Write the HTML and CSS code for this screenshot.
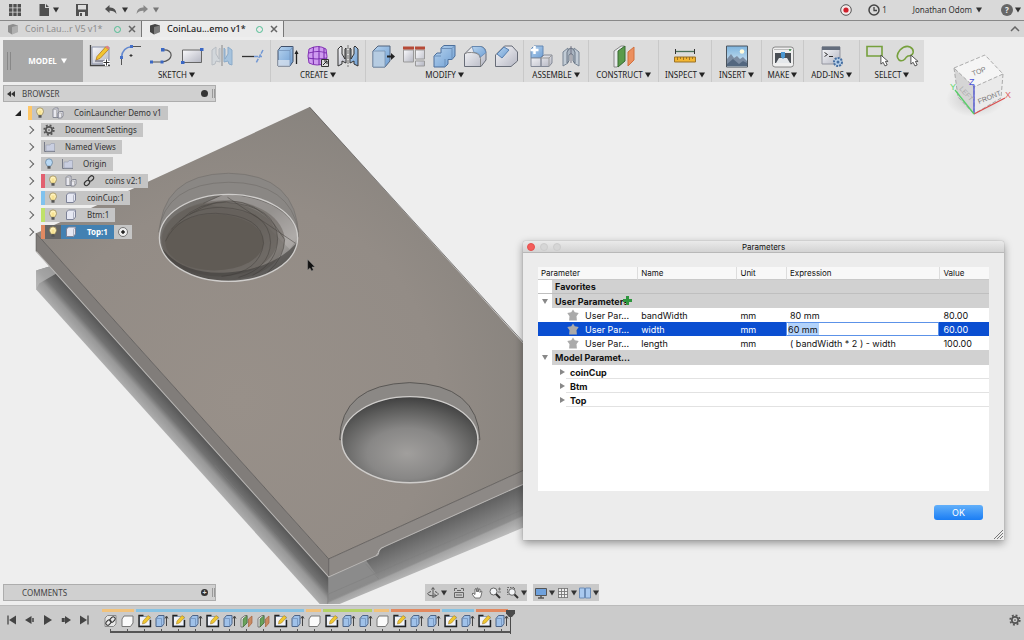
FILE: index.html
```html
<!DOCTYPE html>
<html lang="en">
<head>
<meta charset="utf-8">
<title>CoinLauncher Demo v1</title>
<link rel="stylesheet" href="styles.css">
</head>
<body>
<svg class="defs" aria-hidden="true">
  <defs>
    <linearGradient id="gBlue" x1="0" y1="0" x2="1" y2="1"><stop offset="0" stop-color="#b7d3ee"/><stop offset="1" stop-color="#6f9fd4"/></linearGradient>
    <linearGradient id="gGrey" x1="0" y1="0" x2="1" y2="1"><stop offset="0" stop-color="#fafafc"/><stop offset="1" stop-color="#b4b6c2"/></linearGradient>
    <linearGradient id="gSky" x1="0" y1="0" x2="0" y2="1"><stop offset="0" stop-color="#7db4de"/><stop offset="1" stop-color="#dcebf4"/></linearGradient>
  </defs>
  <symbol id="caret" viewBox="0 0 6 6"><path d="M0 .5h6L3 5.5z" fill="currentColor"/></symbol>
  <symbol id="sketch" viewBox="0 0 24 24"><path d="M2.500 1v20.500H22" fill="none" stroke="#444" stroke-width="1.300"/><path d="M4 3h17v17H4z" fill="url(#gGrey)" stroke="#8890a8"/><path d="M9 12.500 17.500 3l3 2.500-8.500 9-4 1.500z" fill="#f2c531" stroke="#b07a20" stroke-width=".8"/><path d="m17.500 3 3 2.500 1.200-1.600-2.600-2.400z" fill="#e58080"/><path d="M7 17h9" stroke="#556"/><path d="M18.500 15v7M15 18.500h7" stroke="#fff" stroke-width="3"/><path d="M18.500 15.500v6M15.500 18.500h6" stroke="#333"/></symbol>
  <symbol id="fillet" viewBox="0 0 24 24"><path d="M12 2.500h10" stroke="#555"/><path d="M2.500 21v-8" stroke="#555"/><path d="M2.500 13.500Q3 3.500 13 2.500" fill="none" stroke="#6489cf" stroke-width="1.500"/><path d="M1 12h3v3H1zM11 1h3v3h-3z" fill="#4570c8"/><path d="M12 10v3M10.500 11.500h3" stroke="#333"/></symbol>
  <symbol id="curve" viewBox="0 0 24 24"><path d="M2 18h11c12-1 12-13 1-12" fill="none" stroke="#555" stroke-width="1.200"/><path d="M1 16.500h3v3H1zM11.500 16.500h3v3h-3zM12 4h3.500v3.500H12z" fill="#3b68c4"/></symbol>
  <symbol id="rect" viewBox="0 0 24 24"><path d="M2.500 6h19v12.500h-19z" fill="url(#gGrey)" stroke="#666"/><path d="M1 17h3.500v3H1zM20 4h3.500v3H20z" fill="#3b68c4"/></symbol>
  <symbol id="mirror2d" viewBox="0 0 24 24"><path d="M2 21V6l4-3v7l3 5V5l1-1v14l-4-1-1 3z" fill="#d2d7db" stroke="#b7bcc2"/><path d="M22 21V6l-4-3v7l-3 5V5l-1-1v14l4-1 1 3z" fill="#a6c3dd" stroke="#8cabc9"/><path d="M12 1v21" stroke="#888"/></symbol>
  <symbol id="extend" viewBox="0 0 24 24"><path d="M1 12.500h12" stroke="#333" stroke-width="1.300"/><path d="M13 12.500h8M22 6l-7 13" stroke="#7298d4" stroke-width="1.500" stroke-dasharray="4 1"/></symbol>
  <symbol id="extrude" viewBox="0 0 24 24"><path d="M2 6.500 5 2.500h12v15l-3 4.500H2z" fill="url(#gBlue)" stroke="#40506a"/><path d="M2 16h12v6H2z" fill="#e1e7f0" opacity=".7"/><path d="M2 6.500h12V22M14 6.500l3-4" fill="none" stroke="#7593b9" stroke-width=".8"/><path d="M20.500 20V8" stroke="#222" stroke-width="1.300"/><path d="m18.500 10 2-4 2 4z" fill="#222"/></symbol>
  <symbol id="form" viewBox="0 0 24 24"><path d="M3 5q9-5 17 0 2 8 0 14-9 4-17 0-2-7 0-14z" fill="#cf9cf0" stroke="#8434b5"/><path d="M3 9q9-3 17 0M2 14q9 2 19 0M7.500 3q-1 8 0 17M13 2v19M18 4v15" fill="none" stroke="#7b2faf" stroke-width="1.100"/><path d="M15.500 15.500h7v7h-7z" fill="#ddd" stroke="#333"/><path d="m17 21 4-4m-3 0h3v3" fill="none" stroke="#222"/></symbol>
  <symbol id="mirror" viewBox="0 0 24 24"><path d="M2 22V5l3-3 1 1v7l3 5V5l1-1v15l-4-2v3z" fill="url(#gGrey)" stroke="#333"/><path d="M22 22V5l-3-3-1 1v7l-3 5V5l-1-1v15l4-2v3z" fill="url(#gBlue)" stroke="#333"/><path d="M12 1v22" stroke="#777" stroke-dasharray="4 1"/></symbol>
  <symbol id="presspull" viewBox="0 0 24 24"><path d="m2 7 5-5h12v15l-5 6H2z" fill="url(#gBlue)" stroke="#52647e"/><path d="M2 7h12v16H2z" fill="#b6cce2" stroke="#7790ac" stroke-width=".8"/><path d="M16 12.500h5" stroke="#222" stroke-width="2"/><path d="m20 9 4 3.500-4 3.500z" fill="#222"/></symbol>
  <symbol id="align" viewBox="0 0 24 24"><path d="M1.500 6h10v12h-10z" fill="url(#gGrey)" stroke="#999"/><path d="M13.500 6h9v9h-9zM13.500 17h9v5h-9z" fill="url(#gGrey)" stroke="#999"/><path d="M1 2.500h11v3H1zM13 2.500h10v3H13z" fill="#b64a37"/></symbol>
  <symbol id="combine" viewBox="0 0 24 24"><path d="m9 4 3-2.500h11V12l-3 3.500h-4V20l-3 3H2V12l3-3h4z" fill="url(#gBlue)" stroke="#4c6f9b"/><path d="M2 12h7M20 4.500l3-3M9 4.500h11v11M13 15v8" fill="none" stroke="#6b8fb9"/></symbol>
  <symbol id="filletsolid" viewBox="0 0 24 24"><path d="M1.500 10 9 2.500h9q5 1 5 7V16l-5 6.500H1.500z" fill="url(#gGrey)" stroke="#686d78"/><path d="M9 2.500h9q4 1 5 6l-6 5q0-5-6-5z" fill="url(#gBlue)" stroke="#5780b0" stroke-width=".7"/><path d="M1.500 10q2-2 7-1.500 8 0 9 6V22" fill="none" stroke="#888"/></symbol>
  <symbol id="chamfer" viewBox="0 0 24 24"><path d="m1.500 11 9-9H18l5.500 6v9L17 22.500H1.500z" fill="url(#gGrey)" stroke="#686d78"/><path d="m3 10 7-7 5 3-7 8z" fill="url(#gBlue)" stroke="#5780b0"/></symbol>
  <symbol id="component" viewBox="0 0 24 24"><path d="m2 5 3-3h9v9l-3 3H2z" fill="url(#gBlue)" stroke="#6488b4"/><path d="M2 14h10v8.500H2zM12 14l3-3h8v8l-3 3.500h-8z" fill="url(#gGrey)" stroke="#848a97"/><path d="M12 14h8v8.500M20 14l3-3" stroke="#999" fill="none"/><path d="M5.500 2v8M1.500 6h8" stroke="#fff" stroke-width="2.500"/></symbol>
  <symbol id="joint" viewBox="0 0 24 24"><path d="m4 8 5-4v15l-5 3zM20 8l-5-4v15l5 3z" fill="#c2ccd6" stroke="#788594"/><path d="M8 19V8q4-8 8 0v11l-2-2v-6q-2-3-4 0v6z" fill="#aab5c1" stroke="#6c7887"/><path d="M12 2v17" stroke="#667" stroke-width=".8"/></symbol>
  <symbol id="construct" viewBox="0 0 24 24"><path d="m2 7 7-5h3v15l-7 6H2z" fill="#e9eaee" stroke="#888"/><path d="m6 7 7-5v15l-7 6z" fill="#5b9b4b" stroke="#386b33"/><path d="m16 8 6-5v13l-6 6z" fill="#ec8f5e" stroke="#d1703e"/></symbol>
  <symbol id="inspect" viewBox="0 0 24 24"><path d="M2 7.500h20" stroke="#4a7059" stroke-width="1.300"/><path d="M2.500 5v5M21.500 5v5" stroke="#333"/><path d="M1.500 13h21v5h-21z" fill="#f3b632" stroke="#9b7226"/><path d="M4.500 13v3M7.500 13v2M10.500 13v3M13.500 13v2M16.500 13v3M19.500 13v2" stroke="#8b641c" stroke-width=".8"/></symbol>
  <symbol id="insert" viewBox="0 0 24 24"><path d="M1.500 2h21v21h-21z" fill="url(#gSky)" stroke="#4c555e"/><circle cx="17" cy="7.500" r="2.300" fill="#fffbdc"/><path d="m2 15 4-5 3 4 3-2 3 3 3-2 4 4v5H2z" fill="#7c8da3"/><path d="m2 20 6-5 6 5 4-3 4 2v3H2z" fill="#53677f"/></symbol>
  <symbol id="make" viewBox="0 0 24 24"><rect x="1.500" y="3" width="21" height="20" rx="2.500" fill="#efefef" stroke="#888"/><path d="M4 9h16v10H4z" fill="#4a4f55"/><path d="m5 19 3-5h8l3 5z" fill="#e5e8eb"/><path d="M10 8h4v5l-2 2-2-2z" fill="#4a97d1"/><path d="M3 5.500h18" stroke="#bbb"/><circle cx="19" cy="6" r="1" fill="#3b8e4b"/></symbol>
  <symbol id="addins" viewBox="0 0 24 24"><path d="M2 3h18v17H2z" fill="url(#gGrey)" stroke="#9496a0"/><path d="M2 2.500h18V6H2z" fill="#656e7d"/><path d="m4.500 8.500 3 2-3 2M9 12.500h4" fill="none" stroke="#333"/><circle cx="18" cy="18" r="4" fill="#b9d1ea" stroke="#466fa1" stroke-width="2" stroke-dasharray="2 1"/><circle cx="18" cy="18" r="1.500" fill="#466fa1"/></symbol>
  <symbol id="pointer" viewBox="0 0 10 14"><path d="M1 1v10l2.500-2 2 4L8 12 6 8h3z" fill="#fff" stroke="#444"/></symbol>
  <symbol id="selrect" viewBox="0 0 24 24"><path d="M2 2.500h15v9.500H2z" fill="none" stroke="#76a03d" stroke-width="1.600"/><use href="#pointer" x="15" y="10" width="9" height="13"/></symbol>
  <symbol id="sellasso" viewBox="0 0 24 24"><path d="M5 6Q10 1 15 3q4 2 3 6-1 3-5 3-2 1-3 3-3 3-6 1-4-4 1-10z" fill="none" stroke="#76a03d" stroke-width="1.600"/><use href="#pointer" x="15" y="10" width="9" height="13"/></symbol>
  <symbol id="gear" viewBox="0 0 14 14"><circle cx="7" cy="7" r="5.600" fill="none" stroke="#555" stroke-width="2" stroke-dasharray="2.200 2.200"/><circle cx="7" cy="7" r="3.700" fill="none" stroke="#555" stroke-width="2"/><circle cx="7" cy="7" r="1" fill="#555"/></symbol>
  <symbol id="bulb" viewBox="0 0 12 14"><path d="M6 1q4 0 4 4 0 2-2 4.500H4Q2 7 2 5q0-4 4-4z" fill="#fff3bd" stroke="#8c7b45" stroke-width=".8"/><path d="M4.200 9.500h3.600v3H4.200z" fill="#555"/><path d="M5 4v5M7 4v5" stroke="#ecc94d" stroke-width=".7"/></symbol>
  <symbol id="bulboff" viewBox="0 0 12 14"><path d="M6 1q4 0 4 4 0 2-2 4.500H4Q2 7 2 5q0-4 4-4z" fill="#b9d9f4" stroke="#587896" stroke-width=".8"/><path d="M4.200 9.500h3.600v3H4.200z" fill="#555"/></symbol>
  <symbol id="folder" viewBox="0 0 12 12"><path d="M1.500 1v9.500H12" fill="none" stroke="#777b88"/><path d="M3 4h4l1-1.500h3.500V10H3z" fill="#c9cee0" stroke="#9da3b5" stroke-width=".7"/></symbol>
  <symbol id="comp" viewBox="0 0 12 12"><path d="M1 2.500 2.500 1H6v9.500H1zM6 6l1.500-1.500H11V9l-1.500 2H6z" fill="#e8e8ee" stroke="#737785" stroke-width=".8"/><path d="M1 2.500h3.500v8M6 6h3.500v5" fill="none" stroke="#999" stroke-width=".6"/></symbol>
  <symbol id="link" viewBox="0 0 12 12"><rect x="5" y="1.500" width="6" height="4" rx="2" transform="rotate(-45 8 3.500)" fill="none" stroke="#333" stroke-width="1.200"/><rect x="1" y="6" width="6" height="4" rx="2" transform="rotate(-45 4 8)" fill="none" stroke="#333" stroke-width="1.200"/></symbol>
  <symbol id="cube" viewBox="0 0 12 12"><path d="M1.500 3 3.500 1h7v7l-2 2.500h-7z" fill="#e6e8f3" stroke="#7d8297"/><path d="M8.500 3.500v7M8.500 3.500l2-2.500" stroke="#a3a7b9" stroke-width=".8"/></symbol>
  <symbol id="docube" viewBox="0 0 12 12"><path d="m1 2.500 5-1.500 5 1.500v6.500L5 11.500 1 9z" fill="currentColor"/><path d="m5 4 6-1.500v6.500L5 11.500z" fill="#fff" opacity=".3"/></symbol>
  <symbol id="star" viewBox="0 0 12 12"><path d="m6 .5 1.800 2.700 3.900.8-2.200 3.300.4 4.200H2.100l.4-4.200L.3 4l3.900-.8z" fill="#aaa"/></symbol>
  <symbol id="tbody" viewBox="0 0 14 14"><path d="m1.500 5 2-3h9v7L10 12.500H1.500z" fill="#fafafa" stroke="#777" stroke-linejoin="round"/></symbol>
  <symbol id="tlink" viewBox="0 0 14 14"><path d="M1.500 4 4 1.500h8.500V10L10 12.500H1.500z" fill="#e7e7e7" stroke="#888"/><rect x="6" y="3.500" width="6" height="4" rx="2" transform="rotate(-45 9 5.500)" fill="none" stroke="#333"/><rect x="2" y="6.500" width="6" height="4" rx="2" transform="rotate(-45 5 8.500)" fill="none" stroke="#333"/></symbol>
  <symbol id="tsketch" viewBox="0 0 14 14"><path d="M2 2.500h10.500V12H2z" fill="#f2f3f7" stroke="#8ba0bd"/><path d="M6 1.500H1.500v11H13V6" fill="none" stroke="#222" stroke-width="1.400"/><path d="m5.500 7 5-5.500 2.500 2-5 5.500-3 1z" fill="#f0c830" stroke="#a98225" stroke-width=".6"/></symbol>
  <symbol id="textrude" viewBox="0 0 14 14"><path d="m1.500 4.500 2.500-3h5.500v8L7.500 12.500h-6z" fill="#9fc1e9" stroke="#4d6487"/><path d="M1.500 4.500H7v8" fill="none" stroke="#6c8cb7" stroke-width=".7"/><path d="M12 12V3M10.500 4.500 12 2l1.500 2.500" fill="none" stroke="#444"/></symbol>
  <symbol id="tplane" viewBox="0 0 14 14"><path d="m1.500 4.500 4-3h2V9l-4 4h-2z" fill="#eee" stroke="#777"/><path d="m3.500 5 4-3.500V9l-4 4z" fill="#68a35b" stroke="#476f3f" stroke-width=".7"/><path d="m9 5 3.500-3v7L9 13z" fill="#c98a62" stroke="#a5633c" stroke-width=".7"/></symbol>
</svg>

<header class="appbar">
  <div class="appbar-left">
    <button aria-label="Data panel"><svg class="i12" viewBox="0 0 12 12"><path d="M0 0h3.400v3.400H0zM4.300 0h3.400v3.400H4.300zM8.600 0H12v3.400H8.600zM0 4.300h3.400v3.400H0zM4.300 4.300h3.400v3.400H4.300zM8.600 4.300H12v3.400H8.600zM0 8.600h3.400V12H0zM4.300 8.600h3.400V12H4.300zM8.600 8.600H12V12H8.600z" fill="#505050"/></svg></button>
    <button aria-label="File"><svg class="i12" viewBox="0 0 12 12"><path d="M1.500 0H7v4h4v8H1.500zM8 0l3 3H8z" fill="#505050"/></svg><svg class="caret"><use href="#caret"/></svg></button>
    <button aria-label="Save"><svg class="i12" viewBox="0 0 12 12"><path d="M0 0h12v12H0z" fill="#505050"/><path d="M2 1h8v4.500H2zM3 8h6v4H3z" fill="#ddd"/><path d="M4 9h2v3H4z" fill="#505050"/></svg></button>
    <button aria-label="Undo" class="undo"><svg class="i12" viewBox="0 0 12 12"><path d="m0 5 4.500-4v2.500Q11 3 11.500 10 9 6.500 4.500 6.800V9z" fill="#505050"/></svg><svg class="caret"><use href="#caret"/></svg></button>
    <button aria-label="Redo" class="redo"><svg class="i12" viewBox="0 0 12 12"><path d="M12 5 7.500 1v2.500Q1 3 .5 10 3 6.500 7.500 6.800V9z" fill="#888"/></svg><svg class="caret"><use href="#caret"/></svg></button>
  </div>
  <div class="appbar-right">
    <button aria-label="Record"><svg class="i12" viewBox="0 0 12 12"><circle cx="6" cy="6" r="5.300" fill="#f3e9e9" stroke="#555"/><circle cx="6" cy="6" r="2.600" fill="#d01f2b"/></svg></button>
    <button class="jobs"><svg class="i12" viewBox="0 0 12 12"><circle cx="6" cy="6" r="5" fill="none" stroke="#444" stroke-width="1.500"/><path d="M6 3v3.500h3" fill="none" stroke="#444" stroke-width="1.300"/></svg>1</button>
    <button class="user">Jonathan Odom<svg class="caret"><use href="#caret"/></svg></button>
    <button class="help" aria-label="Help"><span class="q">?</span><svg class="caret"><use href="#caret"/></svg></button>
  </div>
</header>

<nav class="tabs">
  <div class="tab"><svg class="i12"><use href="#docube"/></svg><a href="#v5">Coin Lau...r V5 v1*</a><span class="dot"></span><button class="close" aria-label="Close tab"><svg viewBox="0 0 8 8"><path d="m1 1 6 6m0-6L1 7" stroke="currentColor" stroke-width="1.500"/></svg></button></div>
  <div class="tab active"><svg class="i12"><use href="#docube"/></svg><a href="#demo">CoinLau...emo v1*</a><span class="dot"></span><button class="close" aria-label="Close tab"><svg viewBox="0 0 8 8"><path d="m1 1 6 6m0-6L1 7" stroke="currentColor" stroke-width="1.500"/></svg></button></div>
  <button class="collapse" aria-label="Collapse toolbar"><svg viewBox="0 0 10 6"><path d="m1 5 4-4 4 4" fill="none" stroke="#666" stroke-width="1.500"/></svg></button>
</nav>

<main class="stage">
  <svg class="scene" viewBox="0 38 1024 567" preserveAspectRatio="xMidYMid slice" aria-hidden="true">
    <defs>
      <radialGradient id="face" gradientUnits="userSpaceOnUse" cx="240" cy="400" r="330"><stop offset="0" stop-color="#989089"/><stop offset=".6" stop-color="#938c86"/><stop offset="1" stop-color="#85817c"/></radialGradient>
      <linearGradient id="under" gradientUnits="userSpaceOnUse" x1="152" y1="380" x2="132" y2="398"><stop offset="0" stop-color="#565656"/><stop offset=".4" stop-color="#727272"/><stop offset=".6" stop-color="#989898"/><stop offset="1" stop-color="#b2b2b2"/></linearGradient>
      <linearGradient id="under2" gradientUnits="userSpaceOnUse" x1="440" y1="522" x2="456" y2="558"><stop offset="0" stop-color="#606060"/><stop offset=".7" stop-color="#8d8d8d"/><stop offset=".74" stop-color="#a3a3a3"/><stop offset="1" stop-color="#bdbdbd"/></linearGradient>
      <radialGradient id="bowl" cx=".48" cy=".66" r=".65"><stop offset="0" stop-color="#a19f9d"/><stop offset=".45" stop-color="#888786"/><stop offset=".8" stop-color="#5c5c5b"/><stop offset="1" stop-color="#414141"/></radialGradient>
      <linearGradient id="wall" x1="0" y1="0" x2="1" y2="1"><stop offset="0" stop-color="#777470"/><stop offset=".5" stop-color="#716e6b"/><stop offset=".7" stop-color="#a3a09d"/><stop offset="1" stop-color="#4b4947"/></linearGradient>
      <clipPath id="hole1"><ellipse cx="229" cy="238.500" rx="69" ry="43.500"/></clipPath>
    </defs>
    <path d="m37 271 23-7 269 313v27h-9L37 290z" fill="url(#under)"/>
    <path d="m37 271 23-7 4 6-24 14-3 6z" fill="#b9b9b9" opacity=".7"/>
    <path d="m329 577 48-22 5-8 160-72v45L340 604h-12z" fill="url(#under2)"/>
    <path d="m329 577 37-17 13 18-50 22z" fill="#8b8b8b"/>
    <path d="M329 594 540 502M366 564l13 15M328 594v10M215 465l113 129" fill="none" stroke="#7d7d7d" stroke-width=".8" opacity=".6"/>
    <path d="M37 234 310 108l226 250v107L329 559z" fill="url(#face)"/>
    <path d="M37 234v18l292 325v-18z" fill="#817d7a"/>
    <path d="m329 559 211-96v14l-157 71q-4 1-5 5l-2 3-47 21z" fill="#8d8986"/>
    <path d="m37 252 292 325 47-21q3-1 3-4 1-4 5-5l156-70" fill="none" stroke="#b9b7b5" stroke-width="1"/>
    <path d="m37 234 292 325 211-96M329 559v17M37 234v18M310 108l230 253" fill="none" stroke="#4f4c4a" stroke-width=".7"/>
    <path d="M160 238q0-63 69-64 69 1 70 64z" fill="#8a8784"/>
    <path d="M160 238q0-63 69-64 69 1 70 64M159 233q7-49 70-50 62 0 70 50" fill="none" stroke="#6e6a66" stroke-width=".7" opacity=".8"/>
    <g clip-path="url(#hole1)">
      <path d="M155 190h150v100H155z" fill="url(#wall)"/>
      <path d="m204 204 20-9q65 4 75 43l-9 12-34-35z" fill="#b9b6b3" opacity=".5"/>
      <ellipse cx="224" cy="241" rx="61" ry="40" fill="#67625d" opacity=".55"/>
      <ellipse cx="220" cy="240" rx="58" ry="37" fill="#625d58" opacity=".6"/>
      <ellipse cx="215" cy="243" rx="49" ry="28" fill="#605b55"/>
      <path d="M166 242q13-28 50-28 47 2 48 30-4 29-42 33M172 230q18-22 50-22 48 3 49 35-1 26-32 35M180 222q20-20 47-19 50 4 51 36 0 24-25 37M190 215q58-36 95 25 0 18-17 33M204 204l20-9M228 198l68 46" fill="none" stroke="#47433f" stroke-width=".7" opacity=".75"/>
      <path d="M160 245q20 31 68 28 45-3 70-30v45H160z" fill="#393735" opacity=".55"/>
    </g>
    <ellipse cx="229" cy="238.500" rx="69" ry="43.500" fill="none" stroke="#cfcdcb" stroke-width="1.300"/>
    <path d="M340 440q1-55 70-57 68 2 70 57z" fill="#8b8885" stroke="#4e4b49" stroke-width=".8"/>
    <ellipse cx="410" cy="440" rx="68" ry="43" fill="url(#bowl)" stroke="#cfcdcb" stroke-width="1.400"/>
    <path d="M308 260v10.500l2.300-2 1.700 3 1.700-.8-1.400-3.200h3z" fill="#111" stroke="#999" stroke-width=".4"/>
  </svg>

  <svg class="viewcube" viewBox="0 0 72 70" aria-label="View cube">
    <defs><radialGradient id="cubeGlow"><stop offset="0" stop-color="#aaa"/><stop offset="1" stop-color="#aaa" stop-opacity="0"/></radialGradient></defs>
    <ellipse cx="30" cy="48" rx="29" ry="18" fill="url(#cubeGlow)" opacity=".6"/>
    <path d="m9 17 31-13 18 19-29 13z" fill="#f5f5f5"/><path d="m9 17 20 19v27L13 46z" fill="#d5d5d5"/><path d="m29 36 29-13-2 24-27 16z" fill="#eaeaea"/>
    <path d="m9 17 31-13 18 19-29 13zM9 17l4 29 16 17V36M58 23l-2 24-27 16" fill="none" stroke="#999" stroke-dasharray="4 2" stroke-width=".8"/>
    <path d="M29 63V34" stroke="#4b52d7" stroke-width="1.300"/><path d="m29 63 31-16" stroke="#d94d4d" stroke-width="1.300"/><path d="M29 63 10 39" stroke="#58ce69" stroke-width="1.300"/>
    <text x="28" y="25" transform="rotate(-20 28 25)" class="face">TOP</text>
    <text x="34" y="53" transform="rotate(-22 34 53)" class="face">FRONT</text>
    <text x="14" y="38" transform="rotate(48 14 38)" class="face left">LEFT</text>
    <text x="24" y="34" class="axis z">Z</text><text x="60" y="47" class="axis x">X</text><text x="5" y="39" class="axis y">Y</text>
  </svg>

  <div class="toolbar">
    <button class="workspace"><span class="grip"></span>MODEL<svg class="caret"><use href="#caret"/></svg></button>
    <section class="group"><div class="tools"><svg><use href="#sketch"/></svg><svg><use href="#fillet"/></svg><svg><use href="#curve"/></svg><svg><use href="#rect"/></svg><svg><use href="#mirror2d"/></svg><svg><use href="#extend"/></svg></div><button>SKETCH<svg class="caret"><use href="#caret"/></svg></button></section>
    <section class="group"><div class="tools"><svg><use href="#extrude"/></svg><svg><use href="#form"/></svg><svg><use href="#mirror"/></svg></div><button>CREATE<svg class="caret"><use href="#caret"/></svg></button></section>
    <section class="group"><div class="tools"><svg><use href="#presspull"/></svg><svg><use href="#align"/></svg><svg><use href="#combine"/></svg><svg><use href="#filletsolid"/></svg><svg><use href="#chamfer"/></svg></div><button>MODIFY<svg class="caret"><use href="#caret"/></svg></button></section>
    <section class="group"><div class="tools"><svg><use href="#component"/></svg><svg><use href="#joint"/></svg></div><button>ASSEMBLE<svg class="caret"><use href="#caret"/></svg></button></section>
    <section class="group"><div class="tools"><svg><use href="#construct"/></svg></div><button>CONSTRUCT<svg class="caret"><use href="#caret"/></svg></button></section>
    <section class="group"><div class="tools"><svg><use href="#inspect"/></svg></div><button>INSPECT<svg class="caret"><use href="#caret"/></svg></button></section>
    <section class="group"><div class="tools"><svg><use href="#insert"/></svg></div><button>INSERT<svg class="caret"><use href="#caret"/></svg></button></section>
    <section class="group"><div class="tools"><svg><use href="#make"/></svg></div><button>MAKE<svg class="caret"><use href="#caret"/></svg></button></section>
    <section class="group"><div class="tools"><svg><use href="#addins"/></svg></div><button>ADD-INS<svg class="caret"><use href="#caret"/></svg></button></section>
    <section class="group"><div class="tools"><svg><use href="#selrect"/></svg><svg><use href="#sellasso"/></svg></div><button>SELECT<svg class="caret"><use href="#caret"/></svg></button></section>
  </div>

  <div class="panel-bar"><svg class="rewind" viewBox="0 0 8 6"><path d="M4 0v6L0 3zM8 0v6L4 3z" fill="#333"/></svg><span>BROWSER</span><i class="knob"></i><i class="handle"></i></div>
  <ul class="tree">
    <li class="root"><button class="toggle" aria-label="Collapse"><svg viewBox="0 0 6 6"><path d="M6 0v6H0z" fill="#222"/></svg></button><div class="chip orange"><svg><use href="#bulb"/></svg><svg><use href="#comp"/></svg><span>CoinLauncher Demo v1</span></div></li>
    <li><button class="toggle" aria-label="Expand"></button><div class="chip"><svg><use href="#gear"/></svg><span>Document Settings</span></div></li>
    <li><button class="toggle" aria-label="Expand"></button><div class="chip"><svg><use href="#folder"/></svg><span>Named Views</span></div></li>
    <li><button class="toggle" aria-label="Expand"></button><div class="chip"><svg><use href="#bulboff"/></svg><svg><use href="#folder"/></svg><span>Origin</span></div></li>
    <li><button class="toggle" aria-label="Expand"></button><div class="chip red"><svg><use href="#bulb"/></svg><svg><use href="#comp"/></svg><svg><use href="#link"/></svg><span>coins v2:1</span></div></li>
    <li><button class="toggle" aria-label="Expand"></button><div class="chip blue"><svg><use href="#bulb"/></svg><svg><use href="#cube"/></svg><span>coinCup:1</span></div></li>
    <li><button class="toggle" aria-label="Expand"></button><div class="chip green"><svg><use href="#bulb"/></svg><svg><use href="#cube"/></svg><span>Btm:1</span></div></li>
    <li><button class="toggle" aria-label="Expand"></button><div class="chip rust current"><svg><use href="#bulb"/></svg><svg><use href="#cube"/></svg><span>Top:1</span></div><label class="activate"><input type="radio" checked aria-label="Activate component"></label></li>
  </ul>

  <div class="stage-foot">
    <div class="panel-bar comments"><span>COMMENTS</span><i class="knob plus">+</i><i class="handle"></i></div>
    <div class="viewtools">
      <button aria-label="Orbit"><svg viewBox="0 0 12 12"><path d="M6 1v10M4 4.500q-6 2-1 4 4 1 7 0 3-2-2-4M4.500 2.500 6 .5l1.500 2M7 6.500l2 2-2 2" fill="none" stroke="#555"/></svg><svg class="caret"><use href="#caret"/></svg></button>
      <button aria-label="Look at"><svg viewBox="0 0 12 12"><path d="M1.500 5.500h9v5h-9zM3 8h6M1.500 4V1.500H4M10.500 4V1.500H8M4 3.500h4" fill="none" stroke="#666"/></svg></button>
      <button aria-label="Pan"><svg viewBox="0 0 12 12"><path d="M4 11 1 7l1-1 2 1.500V2l1-.5L6 5V1h1v4l1-3h1v3.500L10 4l1 .5L10 9l-1 2z" fill="#fff" stroke="#555" stroke-width=".8"/></svg></button>
      <button aria-label="Zoom"><svg viewBox="0 0 12 12"><circle cx="4.500" cy="4.500" r="3.500" fill="#f3f5f7" stroke="#666"/><path d="m7 7 4 4" stroke="#333" stroke-width="2"/><path d="M9 2h3M10.500.5v3M9 5h3" stroke="#666" stroke-width=".8"/></svg></button>
      <button aria-label="Fit"><svg viewBox="0 0 12 12"><path d="M.5.500h7v7h-7z" fill="none" stroke="#666" stroke-dasharray="1.500 1"/><circle cx="5" cy="5" r="3.300" fill="#f3f5f7" stroke="#666"/><path d="m7.500 7.500 3.500 3.500" stroke="#333" stroke-width="2"/></svg><svg class="caret"><use href="#caret"/></svg></button>
    </div>
    <div class="viewtools display">
      <button aria-label="Display settings"><svg viewBox="0 0 12 12"><path d="M.500 1.500h11v7h-11z" fill="#6fa1dc" stroke="#555"/><path d="M3 11h6M6 9v2" stroke="#555" stroke-width="1.500"/></svg><svg class="caret"><use href="#caret"/></svg></button>
      <button aria-label="Grid settings"><svg viewBox="0 0 12 12"><path d="M1 1h10v10H1z" fill="#eee"/><path d="M1 1.500h10M1 4.500h10M1 7.500h10M1 10.500h10M1.500 1v10M4.500 1v10M7.500 1v10M10.500 1v10" stroke="#777" stroke-width=".9"/></svg><svg class="caret"><use href="#caret"/></svg></button>
      <button aria-label="Viewports"><svg viewBox="0 0 12 12"><path d="M.500 1h5v10h-5zM6.500 1h5v10h-5z" fill="#a9c9ef" stroke="#6c8db8"/></svg><svg class="caret"><use href="#caret"/></svg></button>
    </div>
  </div>

  <section class="dialog" role="dialog" aria-label="Parameters">
    <header class="titlebar"><i class="light red"></i><i class="light"></i><i class="light"></i><h1>Parameters</h1></header>
    <div class="dialog-body">
      <div class="grid">
        <table>
          <colgroup><col class="c-param"><col class="c-name"><col class="c-unit"><col class="c-expr"><col class="c-value"></colgroup>
          <thead><tr><th>Parameter</th><th>Name</th><th>Unit</th><th>Expression</th><th>Value</th></tr></thead>
          <tbody>
            <tr class="section fav"><td colspan="5"><span>Favorites</span></td></tr>
            <tr class="section"><td colspan="5"><b class="arrow down"></b><span>User Parameters</span><button class="add" aria-label="Add parameter"><svg viewBox="0 0 9 9"><path d="M3 0h3v3h3v3H6v3H3V6H0V3h3z" fill="#2f963f"/></svg></button></td></tr>
            <tr><td class="leaf"><svg><use href="#star"/></svg>User Par...</td><td>bandWidth</td><td>mm</td><td>80 mm</td><td>80.00</td></tr>
            <tr class="selected"><td class="leaf"><svg><use href="#star"/></svg>User Par...</td><td>width</td><td>mm</td><td class="edit"><input type="text" value="60 mm" aria-label="Expression for width"></td><td>60.00</td></tr>
            <tr><td class="leaf"><svg><use href="#star"/></svg>User Par...</td><td>length</td><td>mm</td><td>( bandWidth * 2 ) - width</td><td>100.00</td></tr>
            <tr class="section model"><td colspan="5"><b class="arrow down"></b><span>Model Paramet...</span></td></tr>
            <tr class="child"><td colspan="5"><b class="arrow"></b><span>coinCup</span></td></tr>
            <tr class="child"><td colspan="5"><b class="arrow"></b><span>Btm</span></td></tr>
            <tr class="child"><td colspan="5"><b class="arrow"></b><span>Top</span></td></tr>
          </tbody>
        </table>
      </div>
      <button class="ok">OK</button>
    </div>
    <svg class="resize" viewBox="0 0 9 9"><path d="m0 9 9-9M3 9l6-6M6 9l3-3" stroke="#777"/></svg>
  </section>
</main>

<footer class="timeline">
  <div class="playback">
    <button aria-label="Go to start"><svg viewBox="0 0 10 10"><path d="M1 .500v9" stroke="#444" stroke-width="1.300"/><path d="M9 .5v9L2 5z" fill="#444"/></svg></button>
    <button aria-label="Step back"><svg viewBox="0 0 10 10"><path d="M6.500 1v8L0 5z" fill="#444"/><path d="M8 3v4" stroke="#444" stroke-width="1.500"/></svg></button>
    <button aria-label="Play"><svg viewBox="0 0 10 10"><path d="M1 0v10l8-5z" fill="#444"/></svg></button>
    <button aria-label="Step forward"><svg viewBox="0 0 10 10"><path d="M4 1v8l6-4z" fill="#444"/><path d="M1.500 3v4M3 3v4" stroke="#444" stroke-width="1.500"/></svg></button>
    <button aria-label="Go to end"><svg viewBox="0 0 10 10"><path d="M9 .500v9" stroke="#444" stroke-width="1.300"/><path d="M1 .5v9L8 5z" fill="#444"/></svg></button>
  </div>
  <div class="track">
    <div class="run orange"><svg><use href="#tlink"/></svg><svg><use href="#tbody"/></svg></div>
    <div class="run blue"><svg><use href="#tsketch"/></svg><svg><use href="#textrude"/></svg><svg><use href="#tsketch"/></svg><svg><use href="#textrude"/></svg><svg><use href="#tsketch"/></svg><svg><use href="#textrude"/></svg><svg><use href="#tplane"/></svg><svg><use href="#tplane"/></svg><svg><use href="#tsketch"/></svg><svg><use href="#textrude"/></svg></div>
    <div class="run orange"><svg><use href="#tbody"/></svg></div>
    <div class="run green"><svg><use href="#tsketch"/></svg><svg><use href="#textrude"/></svg><svg><use href="#textrude"/></svg></div>
    <div class="run orange"><svg><use href="#tbody"/></svg></div>
    <div class="run rust"><svg><use href="#tsketch"/></svg><svg><use href="#textrude"/></svg><svg><use href="#textrude"/></svg></div>
    <div class="run blue"><svg><use href="#tsketch"/></svg><svg><use href="#textrude"/></svg></div>
    <div class="run rust"><svg><use href="#tsketch"/></svg><svg><use href="#textrude"/></svg></div>
    <svg class="marker" viewBox="0 0 9 24"><path d="M0 0h9v3.500L6 7H3L0 3.500z" fill="#4a4a4a"/><path d="M4.500 5v19" stroke="#4a4a4a"/></svg>
  </div>
  <button class="prefs" aria-label="Timeline settings"><svg viewBox="0 0 14 14"><use href="#gear"/></svg></button>
</footer>
</body>
</html>
```
FILE: styles.css
```css
* { box-sizing: border-box; }
html, body { height: 100%; margin: 0; }
body {
  display: flex;
  flex-direction: column;
  overflow: hidden;
  background: #eee;
  color: #333;
  font: 8px/12px "Noto Sans", "Open Sans", sans-serif;
}
button {
  display: inline-flex;
  align-items: center;
  padding: 0;
  border: 0;
  background: none;
  color: inherit;
  font: inherit;
}
svg { display: block; flex: none; }
a { color: inherit; text-decoration: none; }
.defs { position: absolute; width: 0; height: 0; }
.i12 { width: 12px; height: 12px; }
.caret { width: 6px; height: 6px; }

.appbar {
  display: flex;
  flex: none;
  justify-content: space-between;
  height: 21px;
  padding: 0 3px 0 9px;
  border-bottom: 1px solid #888;
  background: #d9d9d9;
}
.appbar-left, .appbar-right { display: flex; align-items: center; }
.appbar-left { gap: 17px; }
.appbar-left button { gap: 3px; }
.appbar-left .undo { gap: 5px; }
.appbar-left .redo { gap: 5px; color: #777; margin-left: -9px; }
.appbar-right { gap: 16px; }
.appbar-right button { gap: 4px; }
.appbar-right .jobs { gap: 2px; }
.user { margin-left: 10px; }
.appbar-right .help { gap: 2px; margin-left: 3px; }
.q {
  width: 12px;
  height: 12px;
  border-radius: 50%;
  background: #666;
  color: #eee;
  font-weight: 700;
  text-align: center;
}

.tabs {
  display: flex;
  flex: none;
  height: 16px;
  background: #d6d6d6;
}
.tab {
  display: flex;
  align-items: center;
  width: 142px;
  padding: 0 5px 0 7px;
  border-right: 1px solid #777;
  color: #8d8d8d;
  font-size: 9px;
}
.tab a { flex: 1; margin-left: 6px; white-space: nowrap; }
.tab.active { background: #ebebeb; color: #444; }
.tab.active a { color: #222; font-weight: 500; }
.dot { width: 7px; height: 7px; margin-right: 7px; border: 1px solid #4fbd92; border-radius: 50%; }
.close svg { width: 8px; height: 8px; color: #666; }
.collapse { margin: 0 4px 0 auto; }
.collapse svg { width: 10px; height: 6px; }

.stage {
  position: relative;
  display: flex;
  flex: 1;
  flex-direction: column;
  align-items: flex-start;
  min-height: 0;
  padding: 3px 3px 4px;
}
.scene { position: absolute; inset: 0; width: 100%; height: 100%; }
.viewcube { position: absolute; top: 14px; right: 7px; width: 72px; height: 70px; }
.face { fill: #777; font: 7px "Liberation Sans", sans-serif; }
.face.left { fill: #aaa; }
.axis { font: 9px "Liberation Sans", sans-serif; }
.axis.x { fill: #e06767; }
.axis.y { fill: #65d56f; }
.axis.z { fill: #4b52d7; }

.toolbar {
  position: relative;
  display: grid;
  grid-template-columns: 80px 187px 95px 158px 65px 70px 53px 50px 42px 56px 65px;
  height: 42px;
  background: #dcdcdc;
}
.workspace {
  position: relative;
  justify-content: center;
  gap: 4px;
  padding-left: 9px;
  background: #a8a8a8;
  color: #fff;
  font-weight: 700;
}
.grip { position: absolute; left: 4px; top: 12px; width: 4px; height: 18px; border: solid #888; border-width: 0 1px; }
.group {
  display: flex;
  flex-direction: column;
  align-items: center;
  gap: 1px;
  padding: 4px 2px 0;
}
.group + .group { border-left: 1px solid #c9c9c9; }
.tools { display: flex; justify-content: space-around; width: 100%; }
.tools svg { width: 24px; height: 24px; }
.group button { gap: 2px; color: #222; white-space: nowrap; }

.panel-bar {
  position: relative;
  display: flex;
  align-items: center;
  width: 213px;
  height: 17px;
  margin-top: 3px;
  padding: 0 0 0 3px;
  border: 1px solid #adadad;
  background: #d0d0d0;
  color: #444;
}
.panel-bar span { margin-right: auto; }
.rewind { width: 8px; height: 6px; margin-right: 7px; }
.knob { width: 7px; height: 7px; margin-right: 4px; border-radius: 50%; background: #333; }
.knob.plus { color: #ddd; font: 700 7px/7px "Liberation Sans", sans-serif; text-align: center; }
.handle { width: 3px; height: 9px; border: solid #999; border-width: 0 1px; }

.tree {
  position: relative;
  display: grid;
  gap: 3px;
  margin: 4px 0 0;
  padding: 0;
  list-style: none;
}
.tree li { display: flex; align-items: center; height: 14px; padding-left: 24px; }
.tree .root { padding-left: 12px; }
.toggle { width: 14px; height: 14px; }
.root .toggle { width: 13px; }
.toggle svg { width: 6px; height: 6px; }
.tree li:not(.root) .toggle::before {
  content: "";
  width: 5px;
  height: 5px;
  border: solid #666;
  border-width: 1px 1px 0 0;
  transform: rotate(45deg);
}
.chip {
  display: flex;
  align-items: center;
  gap: 6px;
  height: 14px;
  padding: 0 6px 0 2px;
  background: #c5c5c5;
}
.chip svg { width: 12px; height: 12px; }
.chip span { margin-left: 4px; }
.chip.orange, .chip.red, .chip.blue, .chip.green, .chip.rust { border-left: 4px solid; }
.chip.orange { border-color: #ffc766; }
.chip.red { border-color: #e2606f; }
.chip.blue { border-color: #80c2ee; }
.chip.green { border-color: #bfe26a; }
.chip.rust { border-color: #e28a62; }
.chip.current {
  background: linear-gradient(90deg, #666 16px, #4381b2 16px);
  color: #fff;
  font-weight: 700;
}
.activate { display: flex; align-items: center; height: 14px; padding: 0 4px; background: #c5c5c5; }
.activate input {
  appearance: none;
  width: 10px;
  height: 10px;
  margin: 0;
  border: 1px solid #777;
  border-radius: 50%;
  background: radial-gradient(#222 25%, #eee 35%);
}

.stage-foot { position: relative; display: flex; margin-top: auto; }
.comments { margin: 0; padding-left: 18px; }
.viewtools {
  display: flex;
  align-items: center;
  gap: 6px;
  height: 17px;
  margin-left: 209px;
  padding: 0 0 0 2px;
  background: #c9c9c9;
}
.viewtools svg { width: 12px; height: 12px; }
.viewtools button { gap: 2px; }
.viewtools .caret { width: 6px; height: 6px; }
.viewtools.display { gap: 2px; margin-left: 6px; padding-left: 2px; }

.dialog {
  position: absolute;
  top: 204px;
  right: 20px;
  width: 481px;
  background: #ececec;
  border-radius: 3px 3px 0 0;
  box-shadow: 0 0 1px #777, 0 3px 8px rgba(0, 0, 0, .4);
  color: #111;
  font: 9px/14px Inter, "Liberation Sans", sans-serif;
}
.titlebar {
  position: relative;
  display: flex;
  align-items: center;
  gap: 5px;
  height: 12px;
  padding-left: 4px;
  border-bottom: 1px solid #b8b8b8;
  border-radius: 3px 3px 0 0;
  background: linear-gradient(#eaeaea, #d3d3d3);
}
.titlebar h1 { position: absolute; inset: 0; margin: 0; font: 8px/13px Inter, sans-serif; text-align: center; }
.light { width: 8px; height: 8px; border: 1px solid #ccc; border-radius: 50%; background: #d6d6d6; }
.light.red { border-color: #e4504e; background: #f45d5a; }
.dialog-body { display: flex; flex-direction: column; align-items: flex-end; padding: 14px 15px 20px; }
.grid { width: 100%; height: 224px; background: #fff; }
table { width: 100%; border-collapse: separate; border-spacing: 0; table-layout: fixed; }
.c-param, .c-name { width: 22%; }
.c-unit { width: 11%; }
.c-expr { width: 34%; }
th, td { height: 14px; padding: 0 0 0 4px; text-align: left; white-space: nowrap; line-height: 13px; }
th { height: 13px; padding-left: 3px; border-bottom: 1px solid #c9c9c9; background: #f8f8f8; font-size: 8px; font-weight: 400; line-height: 12px; }
th + th { border-left: 1px solid #ddd; }
.section td { position: relative; padding-left: 17px; background: linear-gradient(90deg, #fff 14px, #d1d1d1 14px); font-weight: 700; }
.fav td { border-bottom: 1px solid #bfbfbf; }
.model td { height: 15px; }
.leaf svg { display: inline-block; width: 12px; height: 12px; margin: 0 6px 0 25px; vertical-align: -2px; }
.selected { background: #0a4ed1; color: #fff; }
td.edit { padding: 0; }
.edit input {
  display: block;
  width: 100%;
  height: 14px;
  padding: 0 1px;
  border: 1px solid #5c92e8;
  outline: 0;
  background: linear-gradient(#b3d3fa, #b3d3fa) 1px 0 / 31px 12px no-repeat #fff;
  color: #111;
  font: inherit;
}
.child td { position: relative; padding-left: 32px; font-weight: 700; background: linear-gradient(90deg, #fff 28px, #e2e2e2 28px) bottom / 100% 1px no-repeat; }
.arrow { position: absolute; top: 4px; left: 22px; border: 3px solid transparent; border-left: 5px solid #888; border-right: 0; }
.arrow.down { top: 5px; left: 4px; border: 3px solid transparent; border-top: 5px solid #888; border-bottom: 0; }
.add { position: absolute; top: 2px; left: 85px; }
.add svg { width: 9px; height: 9px; }
.ok {
  justify-content: center;
  width: 49px;
  height: 15px;
  margin: 14px 6px 0 0;
  border-radius: 3px;
  background: linear-gradient(#62b0fa, #1a7df4);
  color: #fff;
}
.resize { position: absolute; right: 1px; bottom: 1px; width: 9px; height: 9px; }

.timeline {
  display: flex;
  flex: none;
  height: 35px;
  border-top: 1px solid #bbb;
  background: #cbcbcb;
}
.playback { display: flex; align-items: center; gap: 8px; height: 28px; padding-left: 7px; }
.playback svg { width: 10px; height: 10px; }
.track { display: flex; align-items: flex-start; padding: 3px 0 0 13px; }
.run {
  display: flex;
  position: relative;
  height: 24px;
  padding-top: 5px;
  background:
    linear-gradient(#555, #555) bottom / 100% 2px no-repeat,
    repeating-linear-gradient(90deg, transparent 0 8px, #555 8px 9px, transparent 9px 17px) bottom / 100% 4px no-repeat;
}
.run:first-child { background-position: 8px 100%, 0 100%; }
.run::before { content: ""; position: absolute; top: 0; left: 0; right: 2px; height: 3px; background: currentColor; }
.run svg { width: 17px; height: 14px; }
.run.orange { color: #f1c27b; }
.run.blue { color: #86c3e4; }
.run.green { color: #b4d267; }
.run.rust { color: #e3885e; }
.marker { width: 9px; height: 24px; margin: 1px 0 0 -4px; position: relative; }
.prefs { height: 28px; margin: 0 3px 0 auto; }
.prefs svg { width: 12px; height: 12px; }
```
